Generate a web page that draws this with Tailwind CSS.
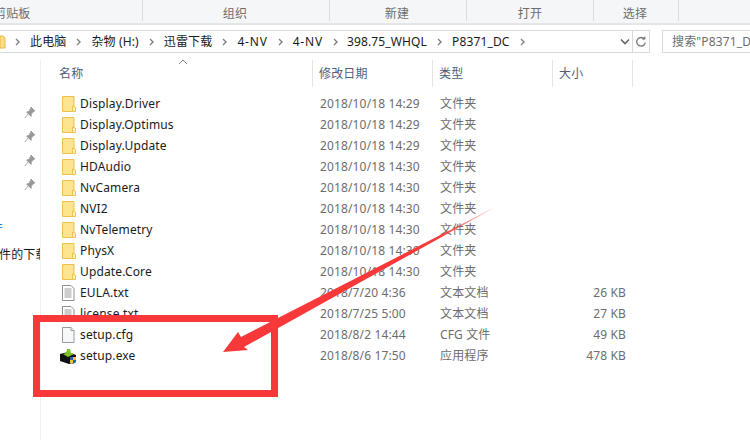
<!doctype html>
<html><head><meta charset="utf-8"><script src="https://cdn.jsdelivr.net/npm/@tailwindcss/browser@4"></script></head>
<body class="bg-white">
<div class="relative w-[750px] h-[440px] overflow-hidden bg-white text-[12px] tracking-[0.14px] leading-[21px] font-['Noto_Sans','Noto_Sans_CJK_SC',sans-serif]">
  <div class="h-[25px] bg-[#f5f6f7] border-b-2 border-[#e5e6e8] flex text-[#6d6d6d] leading-[27px]">
    <div class="w-[143px] h-[21px] border-r border-[#dcdcdc]"><span class="block ml-[-6px]">剪贴板</span></div>
    <div class="w-[187px] h-[21px] border-r border-[#dcdcdc] text-center pr-[2px]"><span>组织</span></div>
    <div class="w-[137px] h-[21px] border-r border-[#dcdcdc] text-center pr-[2px]"><span>新建</span></div>
    <div class="w-[127px] h-[21px] border-r border-[#dcdcdc] text-center"><span>打开</span></div>
    <div class="w-[85px] h-[21px] border-r border-[#dcdcdc] text-center pr-[2px]"><span>选择</span></div>
  </div>
  <div class="h-[23px] mt-[5px] flex">
    <div class="w-[650px] h-[23px] border border-[#d9d9d9] border-l-0 flex items-center justify-between text-[#1a1a1a]">
      <div class="flex items-center h-full leading-none gap-[10px]">
        <svg width="6" height="14" viewBox="0 0 6 14" class="shrink-0"><path d="M0 1h3l2 2v10H0z" fill="#fcdf83" stroke="#e9b949"/></svg>
        <svg width="5" height="8" viewBox="0 0 5 8" class="ml-[-1px]"><path d="M1 1l3 3-3 3" fill="none" stroke="#808080" stroke-width="1.4"/></svg><span>此电脑</span>
        <svg width="5" height="8" viewBox="0 0 5 8"><path d="M1 1l3 3-3 3" fill="none" stroke="#808080" stroke-width="1.4"/></svg><span>杂物 (H:)</span>
        <svg width="5" height="8" viewBox="0 0 5 8"><path d="M1 1l3 3-3 3" fill="none" stroke="#808080" stroke-width="1.4"/></svg><span>迅雷下载</span>
        <svg width="5" height="8" viewBox="0 0 5 8"><path d="M1 1l3 3-3 3" fill="none" stroke="#808080" stroke-width="1.4"/></svg><span class="tracking-[0.8px]">4-NV</span>
        <svg width="5" height="8" viewBox="0 0 5 8"><path d="M1 1l3 3-3 3" fill="none" stroke="#808080" stroke-width="1.4"/></svg><span class="tracking-[0.8px]">4-NV</span>
        <svg width="5" height="8" viewBox="0 0 5 8"><path d="M1 1l3 3-3 3" fill="none" stroke="#808080" stroke-width="1.4"/></svg><span class="ml-[-1px]">398.75_WHQL</span>
        <svg width="5" height="8" viewBox="0 0 5 8"><path d="M1 1l3 3-3 3" fill="none" stroke="#808080" stroke-width="1.4"/></svg><span>P8371_DC</span>
        <svg width="5" height="8" viewBox="0 0 5 8"><path d="M1 1l3 3-3 3" fill="none" stroke="#808080" stroke-width="1.4"/></svg>
      </div>
      <div class="flex items-center h-full">
        <svg width="12" height="8" viewBox="0 0 12 8" class="mr-[1px]"><path d="M2 1.500l4 4 4-4" fill="none" stroke="#666" stroke-width="1.6"/></svg>
        <div class="w-[17px] h-full border-l border-[#d9d9d9] flex items-center justify-center">
          <svg width="12" height="12" viewBox="0 0 12 12"><path d="M9.500 3.200A4.300 4.300 0 1 0 10.300 6.500" fill="none" stroke="#777" stroke-width="1.300"/><path d="M6.800 3.600h3.600V0z" fill="#777"/></svg>
        </div>
      </div>
    </div>
    <div class="ml-[12px] flex-1 h-[23px] border border-[#d9d9d9] border-r-0 pl-[9px] text-[#6d6d6d] leading-[21px] whitespace-nowrap overflow-hidden">搜索"P8371_DC"</div>
  </div>
  <div class="absolute left-0 top-[60px] bottom-0 w-[41px] border-r border-[#efefef]">
    <div class="flex flex-col items-end gap-[11px] pr-[4px] pt-[46px]">
      <svg width="12" height="13" viewBox="0 0 12 13"><path d="M7 1l4 4-1.500 .5L7.500 8l-.5 2.500L2.500 6 5 5.500 6.500 2.500zM4 8l-3 4" fill="#999" stroke="#999" stroke-width=".8"/></svg>
      <svg width="12" height="13" viewBox="0 0 12 13"><path d="M7 1l4 4-1.500 .5L7.500 8l-.5 2.500L2.500 6 5 5.500 6.500 2.500zM4 8l-3 4" fill="#999" stroke="#999" stroke-width=".8"/></svg>
      <svg width="12" height="13" viewBox="0 0 12 13"><path d="M7 1l4 4-1.500 .5L7.500 8l-.5 2.500L2.500 6 5 5.500 6.500 2.500zM4 8l-3 4" fill="#999" stroke="#999" stroke-width=".8"/></svg>
      <svg width="12" height="13" viewBox="0 0 12 13"><path d="M7 1l4 4-1.500 .5L7.500 8l-.5 2.500L2.500 6 5 5.500 6.500 2.500zM4 8l-3 4" fill="#999" stroke="#999" stroke-width=".8"/></svg>
    </div>
    <div class="absolute left-0 top-[157px] w-[40px] overflow-hidden whitespace-nowrap"><span class="block ml-[-9px] text-[#2a6fc0]">件</span></div>
    <div class="absolute left-0 top-[184px] w-[40px] overflow-hidden whitespace-nowrap text-[#1a1a1a]"><span class="block ml-[-1px]">件的下载</span></div>
  </div>
  <div class="absolute left-[41px] top-[60px] right-0">
    <div class="relative h-[27px] flex text-[#4c607a] leading-[28px]">
      <div class="w-[272px] h-[27px] border-r border-[#e5e5e5] pl-[18px]">名称</div>
      <div class="w-[120px] h-[27px] border-r border-[#e5e5e5] pl-[6px]">修改日期</div>
      <div class="w-[120px] h-[27px] border-r border-[#e5e5e5] pl-[6px]">类型</div>
      <div class="w-[80px] h-[27px] border-r border-[#e5e5e5] pl-[6px]">大小</div>
      <svg class="absolute left-[137px] top-[-1px]" width="10" height="6" viewBox="0 0 10 6"><path d="M1 5l4-4 4 4" fill="none" stroke="#888"/></svg>
    </div>
    <div class="pt-[6px]">
      <div class="flex h-[21px]"><div class="w-[273px] pl-[20px] flex items-center gap-[3px] text-[#1a1a1a]"><svg width="16" height="16" viewBox="0 0 16 16"><path d="M1.500 .5h11.500v15H1.500z" fill="#fde48f" stroke="#eec14f"/><path d="M11.500 10v5.500h3V11.500z" fill="#fff3c0" stroke="#eec14f"/></svg>Display.Driver</div><div class="w-[120px] pl-[6px] text-[#6d6d6d]">2018/10/18 14:29</div><div class="w-[120px] pl-[6px] text-[#6d6d6d]">文件夹</div><div class="w-[72px]"></div></div>
      <div class="flex h-[21px]"><div class="w-[273px] pl-[20px] flex items-center gap-[3px] text-[#1a1a1a]"><svg width="16" height="16" viewBox="0 0 16 16"><path d="M1.500 .5h11.500v15H1.500z" fill="#fde48f" stroke="#eec14f"/><path d="M11.500 10v5.500h3V11.500z" fill="#fff3c0" stroke="#eec14f"/></svg>Display.Optimus</div><div class="w-[120px] pl-[6px] text-[#6d6d6d]">2018/10/18 14:29</div><div class="w-[120px] pl-[6px] text-[#6d6d6d]">文件夹</div></div>
      <div class="flex h-[21px]"><div class="w-[273px] pl-[20px] flex items-center gap-[3px] text-[#1a1a1a]"><svg width="16" height="16" viewBox="0 0 16 16"><path d="M1.500 .5h11.500v15H1.500z" fill="#fde48f" stroke="#eec14f"/><path d="M11.500 10v5.500h3V11.500z" fill="#fff3c0" stroke="#eec14f"/></svg>Display.Update</div><div class="w-[120px] pl-[6px] text-[#6d6d6d]">2018/10/18 14:29</div><div class="w-[120px] pl-[6px] text-[#6d6d6d]">文件夹</div></div>
      <div class="flex h-[21px]"><div class="w-[273px] pl-[20px] flex items-center gap-[3px] text-[#1a1a1a]"><svg width="16" height="16" viewBox="0 0 16 16"><path d="M1.500 .5h11.500v15H1.500z" fill="#fde48f" stroke="#eec14f"/><path d="M11.500 10v5.500h3V11.500z" fill="#fff3c0" stroke="#eec14f"/></svg>HDAudio</div><div class="w-[120px] pl-[6px] text-[#6d6d6d]">2018/10/18 14:30</div><div class="w-[120px] pl-[6px] text-[#6d6d6d]">文件夹</div></div>
      <div class="flex h-[21px]"><div class="w-[273px] pl-[20px] flex items-center gap-[3px] text-[#1a1a1a]"><svg width="16" height="16" viewBox="0 0 16 16"><path d="M1.500 .5h11.500v15H1.500z" fill="#fde48f" stroke="#eec14f"/><path d="M11.500 10v5.500h3V11.500z" fill="#fff3c0" stroke="#eec14f"/></svg>NvCamera</div><div class="w-[120px] pl-[6px] text-[#6d6d6d]">2018/10/18 14:30</div><div class="w-[120px] pl-[6px] text-[#6d6d6d]">文件夹</div></div>
      <div class="flex h-[21px]"><div class="w-[273px] pl-[20px] flex items-center gap-[3px] text-[#1a1a1a]"><svg width="16" height="16" viewBox="0 0 16 16"><path d="M1.500 .5h11.500v15H1.500z" fill="#fde48f" stroke="#eec14f"/><path d="M11.500 10v5.500h3V11.500z" fill="#fff3c0" stroke="#eec14f"/></svg>NVI2</div><div class="w-[120px] pl-[6px] text-[#6d6d6d]">2018/10/18 14:30</div><div class="w-[120px] pl-[6px] text-[#6d6d6d]">文件夹</div></div>
      <div class="flex h-[21px]"><div class="w-[273px] pl-[20px] flex items-center gap-[3px] text-[#1a1a1a]"><svg width="16" height="16" viewBox="0 0 16 16"><path d="M1.500 .5h11.500v15H1.500z" fill="#fde48f" stroke="#eec14f"/><path d="M11.500 10v5.500h3V11.500z" fill="#fff3c0" stroke="#eec14f"/></svg>NvTelemetry</div><div class="w-[120px] pl-[6px] text-[#6d6d6d]">2018/10/18 14:30</div><div class="w-[120px] pl-[6px] text-[#6d6d6d]">文件夹</div></div>
      <div class="flex h-[21px]"><div class="w-[273px] pl-[20px] flex items-center gap-[3px] text-[#1a1a1a]"><svg width="16" height="16" viewBox="0 0 16 16"><path d="M1.500 .5h11.500v15H1.500z" fill="#fde48f" stroke="#eec14f"/><path d="M11.500 10v5.500h3V11.500z" fill="#fff3c0" stroke="#eec14f"/></svg>PhysX</div><div class="w-[120px] pl-[6px] text-[#6d6d6d]">2018/10/18 14:30</div><div class="w-[120px] pl-[6px] text-[#6d6d6d]">文件夹</div></div>
      <div class="flex h-[21px]"><div class="w-[273px] pl-[20px] flex items-center gap-[3px] text-[#1a1a1a]"><svg width="16" height="16" viewBox="0 0 16 16"><path d="M1.500 .5h11.500v15H1.500z" fill="#fde48f" stroke="#eec14f"/><path d="M11.500 10v5.500h3V11.500z" fill="#fff3c0" stroke="#eec14f"/></svg>Update.Core</div><div class="w-[120px] pl-[6px] text-[#6d6d6d]">2018/10/18 14:30</div><div class="w-[120px] pl-[6px] text-[#6d6d6d]">文件夹</div></div>
      <div class="flex h-[21px]"><div class="w-[273px] pl-[20px] flex items-center gap-[3px] text-[#1a1a1a]"><svg width="16" height="16" viewBox="0 0 16 16"><path d="M1.500 .5h8.500l3 3v12H1.500z" fill="#fff" stroke="#8f8f8f"/><path d="M3.500 4h7M3.500 6h7M3.500 8h7M3.500 10h7M3.500 12h7" stroke="#9a9a9a"/></svg>EULA.txt</div><div class="w-[120px] pl-[6px] text-[#6d6d6d]">2018/7/20 4:36</div><div class="w-[120px] pl-[6px] text-[#6d6d6d]">文本文档</div><div class="w-[72px] text-right text-[#6d6d6d]">26 KB</div></div>
      <div class="flex h-[21px]"><div class="w-[273px] pl-[20px] flex items-center gap-[3px] text-[#1a1a1a]"><svg width="16" height="16" viewBox="0 0 16 16"><path d="M1.500 .5h8.500l3 3v12H1.500z" fill="#fff" stroke="#8f8f8f"/><path d="M3.500 4h7M3.500 6h7M3.500 8h7M3.500 10h7M3.500 12h7" stroke="#9a9a9a"/></svg>license.txt</div><div class="w-[120px] pl-[6px] text-[#6d6d6d]">2018/7/25 5:00</div><div class="w-[120px] pl-[6px] text-[#6d6d6d]">文本文档</div><div class="w-[72px] text-right text-[#6d6d6d]">27 KB</div></div>
      <div class="flex h-[21px]"><div class="w-[273px] pl-[20px] flex items-center gap-[3px] text-[#1a1a1a]"><svg width="16" height="16" viewBox="0 0 16 16"><path d="M1.500 .5h8.500l3 3v12H1.500z" fill="#f7f8f9" stroke="#9a9a9a"/><path d="M10 .5v3h3" fill="#fff" stroke="#9a9a9a"/></svg>setup.cfg</div><div class="w-[120px] pl-[6px] text-[#6d6d6d]">2018/8/2 14:44</div><div class="w-[120px] pl-[6px] text-[#6d6d6d]">CFG 文件</div><div class="w-[72px] text-right text-[#6d6d6d]">49 KB</div></div>
      <div class="flex h-[21px]"><div class="w-[273px] pl-[20px] flex items-center gap-[3px] text-[#1a1a1a]"><svg width="16" height="16" viewBox="0 0 16 16" class="ml-[-1px] mr-[1px]"><path d="M0 6l8-2 8 3v7l-7 2-9-3z" fill="#111"/><path d="M3 6l3-1 1-4h3l1 4 3 1-6 3z" fill="#7ec427"/><path d="M10 9h6v5l-3 2-3-2z" fill="#2a5fb0"/><path d="M13 9h3v3h-3zM10 12h3v3h-3z" fill="#f2c230"/></svg>setup.exe</div><div class="w-[120px] pl-[6px] text-[#6d6d6d]">2018/8/6 17:50</div><div class="w-[120px] pl-[6px] text-[#6d6d6d]">应用程序</div><div class="w-[72px] text-right text-[#6d6d6d]">478 KB</div></div>
    </div>
  </div>
  <div class="absolute left-[33px] top-[315px] w-[245px] h-[82px] border-[7px] border-[#f93939]"></div>
  <svg class="absolute left-0 top-0" width="750" height="440" viewBox="0 0 750 440">
    <defs><linearGradient id="a" x1="500" y1="205" x2="440" y2="237" gradientUnits="userSpaceOnUse"><stop offset="0" stop-color="#f93939" stop-opacity="0.1"/><stop offset="1" stop-color="#f93939"/></linearGradient></defs>
    <path d="M501 204L241 337 238 332 223 352 248 350 244 347z" fill="url(#a)"/>
  </svg>
</div>
</body></html>
